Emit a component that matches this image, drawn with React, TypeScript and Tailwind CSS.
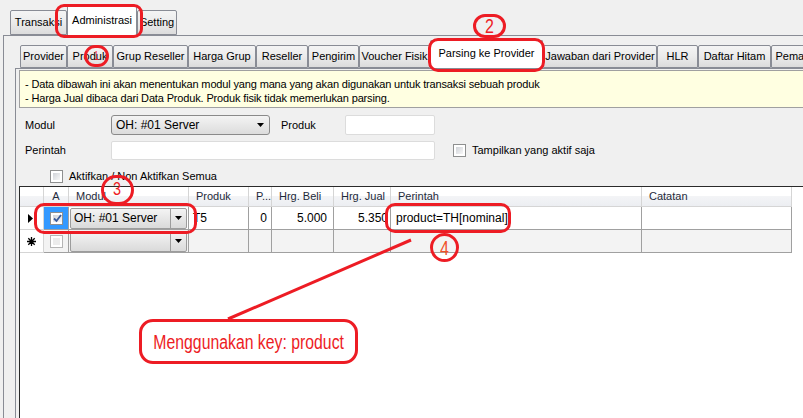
import React from 'react';

const Check = ({ checked, dim }: { checked?: boolean; dim?: boolean }) => (
  <div className={`w-[13px] h-[13px] border ${dim ? 'border-[#b5b5b5]' : 'border-[#8e8f8f]'} bg-white p-[2px] flex shrink-0`}>
    <div className={`flex-1 flex items-center justify-center ${dim ? 'bg-[#ececec]' : 'bg-gradient-to-br from-[#d0d3d8] to-[#f7f7f7]'}`}>
      {checked && (
        <svg width="9" height="9" viewBox="0 0 9 9">
          <path d="M1 4.5 L3.5 7 L8 1" fill="none" stroke="#3a5a9a" strokeWidth="1.8" />
        </svg>
      )}
    </div>
  </div>
);

const Arrow = () => (
  <svg width="7" height="4" viewBox="0 0 7 4">
    <path d="M0 0 H7 L3.5 4 Z" fill="#000" />
  </svg>
);

const OuterTab = ({ label, className, active }: { label: string; className: string; active?: boolean }) => (
  <div
    className={`${className} shrink-0 border border-[#898c95] rounded-t-[2px] text-center ${
      active ? 'bg-white border-b-0 -mb-px relative z-10 pt-[8px]' : 'bg-gradient-to-b from-[#f4f4f4] via-[#ebebeb] to-[#dcdcdc] pt-[5px]'
    }`}
  >
    {label}
  </div>
);

const innerTabs: { label: string; w: string; active?: boolean }[] = [
  { label: 'Provider', w: 'w-[47px]' },
  { label: 'Produk', w: 'w-[46px]' },
  { label: 'Grup Reseller', w: 'w-[75px]' },
  { label: 'Harga Grup', w: 'w-[68px]' },
  { label: 'Reseller', w: 'w-[52px]' },
  { label: 'Pengirim', w: 'w-[51px]' },
  { label: 'Voucher Fisik', w: 'w-[71px]' },
  { label: 'Parsing ke Provider', w: 'w-[113px]', active: true },
  { label: 'Jawaban dari Provider', w: 'w-[114px]' },
  { label: 'HLR', w: 'w-[41px]' },
  { label: 'Daftar Hitam', w: 'w-[73px]' },
  { label: 'Pemakaian', w: 'w-[64px]' },
];

const head = 'h-[20px] border-r border-b border-[#d5d5d5] bg-[linear-gradient(#ffffff_0%,#ffffff_50%,#f3f4f6_50%,#eceef2_100%)] text-[#1e2a3a] flex items-center whitespace-nowrap overflow-hidden';
const cell = 'h-[23px] border-r border-b border-[#a0a0a0] flex items-center whitespace-nowrap overflow-hidden';

const GridCombo = ({ text }: { text?: string }) => (
  <div className="flex-1 h-[21px] mx-px border border-[#9c9c9c] rounded-[2px] bg-gradient-to-b from-[#f4f4f4] to-[#dadada] flex items-center">
    <div className="flex-1 pl-[3px] text-[12px]">{text}</div>
    <div className="w-[16px] self-stretch border-l border-[#9c9c9c] flex items-center justify-center">
      <Arrow />
    </div>
  </div>
);

export default function App() {
  return (
    <div className="w-[803px] h-[418px] bg-[#f0f0f0] relative overflow-hidden text-[11px] leading-[13px] text-black font-['Liberation_Sans',Arial,sans-serif] flex flex-col">
      {/* outer tabs */}
      <div className="flex items-end h-[35px] pl-[10px] shrink-0">
        <OuterTab label="Transaksi" className="w-[57px] h-[25px]" />
        <OuterTab label="Administrasi" className="w-[70px] h-[31px]" active />
        <OuterTab label="Setting" className="w-[40px] h-[25px]" />
      </div>

      <div className="flex-1 ml-[3px] border-l border-t border-[#898c95] pl-[11px] flex flex-col min-h-0">
        {/* inner tabs */}
        <div className="flex items-end h-[32px] pl-[5px] shrink-0 overflow-hidden">
          {innerTabs.map((t) => (
            <div
              key={t.label}
              className={`${t.w} shrink-0 border border-[#898c95] rounded-t-[2px] text-center whitespace-nowrap overflow-hidden ${
                t.active
                  ? 'h-[29px] bg-white border-b-0 -mb-px relative z-10 pt-[6px]'
                  : 'h-[23px] bg-gradient-to-b from-[#f4f4f4] via-[#ebebeb] to-[#dcdcdc] pt-[4px]'
              }`}
            >
              {t.label}
            </div>
          ))}
        </div>

        <div className="flex-1 border-l border-t border-[#898c95] flex flex-col min-h-0">
          {/* info */}
          <div className="ml-[3px] mt-px h-[38px] bg-[#ffffe1] border-l border-t border-b border-[#a0a0a0] pl-[5px] pt-[6px] leading-[14px] tracking-[-0.15px] shrink-0">
            <div>- Data dibawah ini akan menentukan modul yang mana yang akan digunakan untuk transaksi sebuah produk</div>
            <div>- Harga Jual dibaca dari Data Produk. Produk fisik tidak memerlukan parsing.</div>
          </div>

          {/* filters */}
          <div className="pl-[9px] shrink-0">
            <div className="mt-[7px] h-[20px] flex items-center">
              <div className="w-[86px]">Modul</div>
              <div className="w-[159px] h-[20px] border border-[#8a8a8a] rounded-[3px] bg-gradient-to-b from-[#f4f4f4] to-[#dcdcdc] flex items-center pl-[4px] pr-[5px]">
                <div className="flex-1 text-[12px]">OH: #01 Server</div>
                <Arrow />
              </div>
              <div className="ml-[11px] w-[64px]">Produk</div>
              <div className="w-[90px] h-[20px] bg-white border border-[#dcdcdc] rounded-[2px]" />
            </div>
            <div className="mt-[6px] h-[19px] flex items-center">
              <div className="w-[86px]">Perintah</div>
              <div className="w-[324px] h-[19px] bg-white border border-[#dcdcdc] rounded-[2px]" />
              <div className="ml-[18px]">
                <Check />
              </div>
              <div className="ml-[6px]">Tampilkan yang aktif saja</div>
            </div>
            <div className="mt-[10px] h-[13px] flex items-center pl-[25px]">
              <Check />
              <div className="ml-[6px]">Aktifkan / Non Aktifkan Semua</div>
            </div>
          </div>

          {/* grid */}
          <div className="ml-[3px] mt-[3px] flex-1 bg-white border-l border-t border-[#2a2a2a]">
            <div className="grid grid-cols-[24px_25px_120px_60px_23px_62px_57px_251px_150px] w-[772px]">
              <div className={head} />
              <div className={`${head} justify-center`}>A</div>
              <div className={`${head} pl-[7px]`}>Modul</div>
              <div className={`${head} pl-[7px]`}>Produk</div>
              <div className={`${head} pl-[7px]`}>P...</div>
              <div className={`${head} pl-[7px]`}>Hrg. Beli</div>
              <div className={`${head} pl-[7px]`}>Hrg. Jual</div>
              <div className={`${head} pl-[7px]`}>Perintah</div>
              <div className={`${head} pl-[7px]`}>Catatan</div>

              <div className={`${cell} border-[#d5d5d5] bg-white pl-[8px]`}>
                <svg width="5" height="9" viewBox="0 0 5 9">
                  <path d="M0 0 L5 4.5 L0 9 Z" fill="#000" />
                </svg>
              </div>
              <div className={`${cell} bg-[#3399ff] justify-center`}>
                <Check checked />
              </div>
              <div className={`${cell}`}>
                <GridCombo text="OH: #01 Server" />
              </div>
              <div className={`${cell} pl-[4px] text-[12px]`}>T5</div>
              <div className={`${cell} justify-end pr-[4px] text-[12px]`}>0</div>
              <div className={`${cell} justify-end pr-[6px] text-[12px]`}>5.000</div>
              <div className={`${cell} justify-end pr-[2px] text-[12px]`}>5.350</div>
              <div className={`${cell} pl-[5px] text-[12px]`}>product=TH[nominal]</div>
              <div className={`${cell} bg-white`} />

              <div className={`${cell} border-[#d5d5d5] bg-white pl-[7px]`}>
                <svg width="9" height="9" viewBox="0 0 9 9" stroke="#000" strokeWidth="1.3">
                  <path d="M4.5 0 V9 M0 4.5 H9 M1.3 1.3 L7.7 7.7 M7.7 1.3 L1.3 7.7" />
                </svg>
              </div>
              <div className={`${cell} bg-[#f3f3f3] justify-center`}>
                <Check dim />
              </div>
              <div className={`${cell} bg-[#f3f3f3]`}>
                <GridCombo />
              </div>
              <div className={`${cell} bg-[#f3f3f3]`} />
              <div className={`${cell} bg-[#f3f3f3]`} />
              <div className={`${cell} bg-[#f3f3f3]`} />
              <div className={`${cell} bg-[#f3f3f3]`} />
              <div className={`${cell} bg-[#f3f3f3]`} />
              <div className={`${cell} bg-[#f3f3f3]`} />
            </div>
          </div>
        </div>
      </div>

      {/* annotations */}
      <div className="absolute inset-0 pointer-events-none z-20 text-[#ed1c24] font-['Liberation_Sans',Arial,sans-serif]">
        <svg className="absolute inset-0" width="803" height="418">
          <line x1="228" y1="319" x2="411" y2="240" stroke="#ed1c24" strokeWidth="3" />
        </svg>
        <div className="absolute left-[55px] top-[4px] w-[88px] h-[34px] border-[3px] border-[#ed1c24] rounded-[9px]" />
        <div className="absolute left-[84px] top-[45px] w-[25px] h-[22px] border-[3px] border-[#ed1c24] rounded-full flex items-center justify-center text-[12px] leading-none">
          <span className="inline-block scale-x-[0.6]">1</span>
        </div>
        <div className="absolute left-[473px] top-[14px] w-[33px] h-[24px] border-[3px] border-[#ed1c24] rounded-full flex items-center justify-center text-[20px] leading-none">
          <span className="inline-block scale-x-[0.8]">2</span>
        </div>
        <div className="absolute left-[428px] top-[38px] w-[117px] h-[34px] border-[3px] border-[#ed1c24] rounded-[10px]" />
        <div className="absolute left-[101px] top-[175px] w-[33px] h-[30px] border-[3px] border-[#ed1c24] rounded-full flex items-start justify-center pt-[2px] text-[18px] leading-none">
          <span className="inline-block scale-x-[0.8]">3</span>
        </div>
        <div className="absolute left-[34px] top-[203px] w-[163px] h-[31px] border-[3px] border-[#ed1c24] rounded-[10px]" />
        <div className="absolute left-[385px] top-[203px] w-[126px] h-[30px] border-[3px] border-[#ed1c24] rounded-[10px]" />
        <div className="absolute left-[430px] top-[233px] w-[29px] h-[29px] border-[3px] border-[#ed1c24] rounded-full flex items-center justify-center text-[20px] leading-none text-[#f0502a]">
          <span className="inline-block scale-x-[0.8]">4</span>
        </div>
        <div className="absolute left-[139px] top-[319px] w-[219px] h-[45px] border-[3px] border-[#ed1c24] rounded-[14px] flex items-center justify-center text-[20px] leading-none">
          <span className="inline-block whitespace-nowrap scale-x-[0.79]">Menggunakan key: product</span>
        </div>
      </div>
    </div>
  );
}
